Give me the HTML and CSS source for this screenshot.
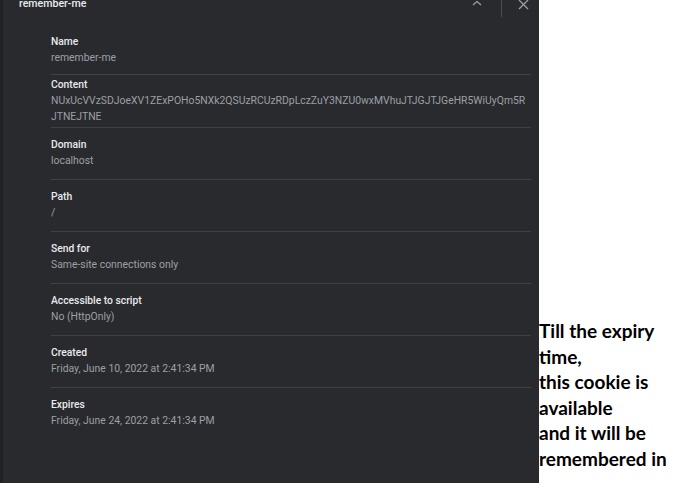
FILE: index.html
```html
<!DOCTYPE html>
<html>
<head>
<meta charset="utf-8">
<link rel="stylesheet" href="styles.css">
</head>
<body>
<div class="page">
  <div class="panel">
    <div class="strip"></div>
    <div class="main">
      <div class="header">
        <div class="title">remember-me</div>
        <div class="actions">
          <svg class="chev" width="10" height="6" viewBox="0 0 10 6"><path d="M1 5 L5 1.5 L9 5" fill="none" stroke="#9aa0a6" stroke-width="1.3"/></svg>
          <div class="divider"></div>
          <svg class="close" width="11" height="11" viewBox="0 0 11 11"><path d="M1 0 L10 9 M10 0 L1 9" fill="none" stroke="#9aa0a6" stroke-width="1.3"/></svg>
        </div>
      </div>
      <div class="rows">
        <div class="row first">
          <div class="label">Name</div>
          <div class="value">remember-me</div>
        </div>
        <div class="row row-content">
          <div class="label">Content</div>
          <div class="value wrap">NUxUcVVzSDJoeXV1ZExPOHo5NXk2QSUzRCUzRDpLczZuY3NZU0wxMVhuJTJGJTJGeHR5WiUyQm5R<br>JTNEJTNE</div>
        </div>
        <div class="row">
          <div class="label">Domain</div>
          <div class="value">localhost</div>
        </div>
        <div class="row">
          <div class="label">Path</div>
          <div class="value">/</div>
        </div>
        <div class="row">
          <div class="label">Send for</div>
          <div class="value">Same-site connections only</div>
        </div>
        <div class="row">
          <div class="label">Accessible to script</div>
          <div class="value">No (HttpOnly)</div>
        </div>
        <div class="row">
          <div class="label">Created</div>
          <div class="value">Friday, June 10, 2022 at 2:41:34 PM</div>
        </div>
        <div class="row last">
          <div class="label">Expires</div>
          <div class="value">Friday, June 24, 2022 at 2:41:34 PM</div>
        </div>
      </div>
    </div>
  </div>
  <div class="note">Till the expiry<br>time,<br>this cookie is<br>available<br>and it will be<br>remembered in</div>
</div>
</body>
</html>
```
FILE: styles.css
```css
html, body {
  margin: 0;
  padding: 0;
  background: #ffffff;
}
.page {
  display: flex;
  align-items: flex-start;
  width: 697px;
  height: 490px;
}
.panel {
  display: flex;
  width: 539px;
  height: 483px;
  background: #292a2d;
  flex-shrink: 0;
  overflow: hidden;
}
.strip {
  width: 3px;
  flex-shrink: 0;
  background: #202124;
}
.main {
  flex: 1;
  min-width: 0;
  display: flex;
  flex-direction: column;
  font-family: Roboto, "Noto Sans", sans-serif;
}
.header {
  display: flex;
  align-items: flex-start;
  height: 25px;
  padding-left: 16px;
}
.title {
  color: #e8eaed;
  font-size: 10.6px;
  font-weight: 500;
  line-height: 12px;
  margin-top: -2px;
  flex: 1;
}
.actions {
  display: flex;
  align-items: flex-start;
  margin-right: 10px;
}
.chev {
  margin-right: 19px;
}
.divider {
  width: 1px;
  height: 17px;
  background: #4a4c50;
  margin-right: 16px;
}
.rows {
  margin-left: 48px;
  margin-right: 8px;
}
.row {
  padding: 9px 0 10px;
  border-bottom: 1px solid #3f4043;
}
.row.first {
  padding-bottom: 8px;
}
.row.last {
  border-bottom: none;
}
.row-content {
  padding: 2px 0 2px;
}
.label {
  color: #e8eaed;
  font-size: 10.3px;
  font-weight: 500;
  line-height: 16px;
}
.value {
  color: #9aa0a6;
  font-size: 10.4px;
  line-height: 16px;
  white-space: nowrap;
}
.note {
  font-family: Lato, "Open Sans", sans-serif;
  font-weight: 700;
  font-size: 19px;
  line-height: 25.6px;
  color: #000000;
  margin-top: 318px;
  white-space: nowrap;
}
```
